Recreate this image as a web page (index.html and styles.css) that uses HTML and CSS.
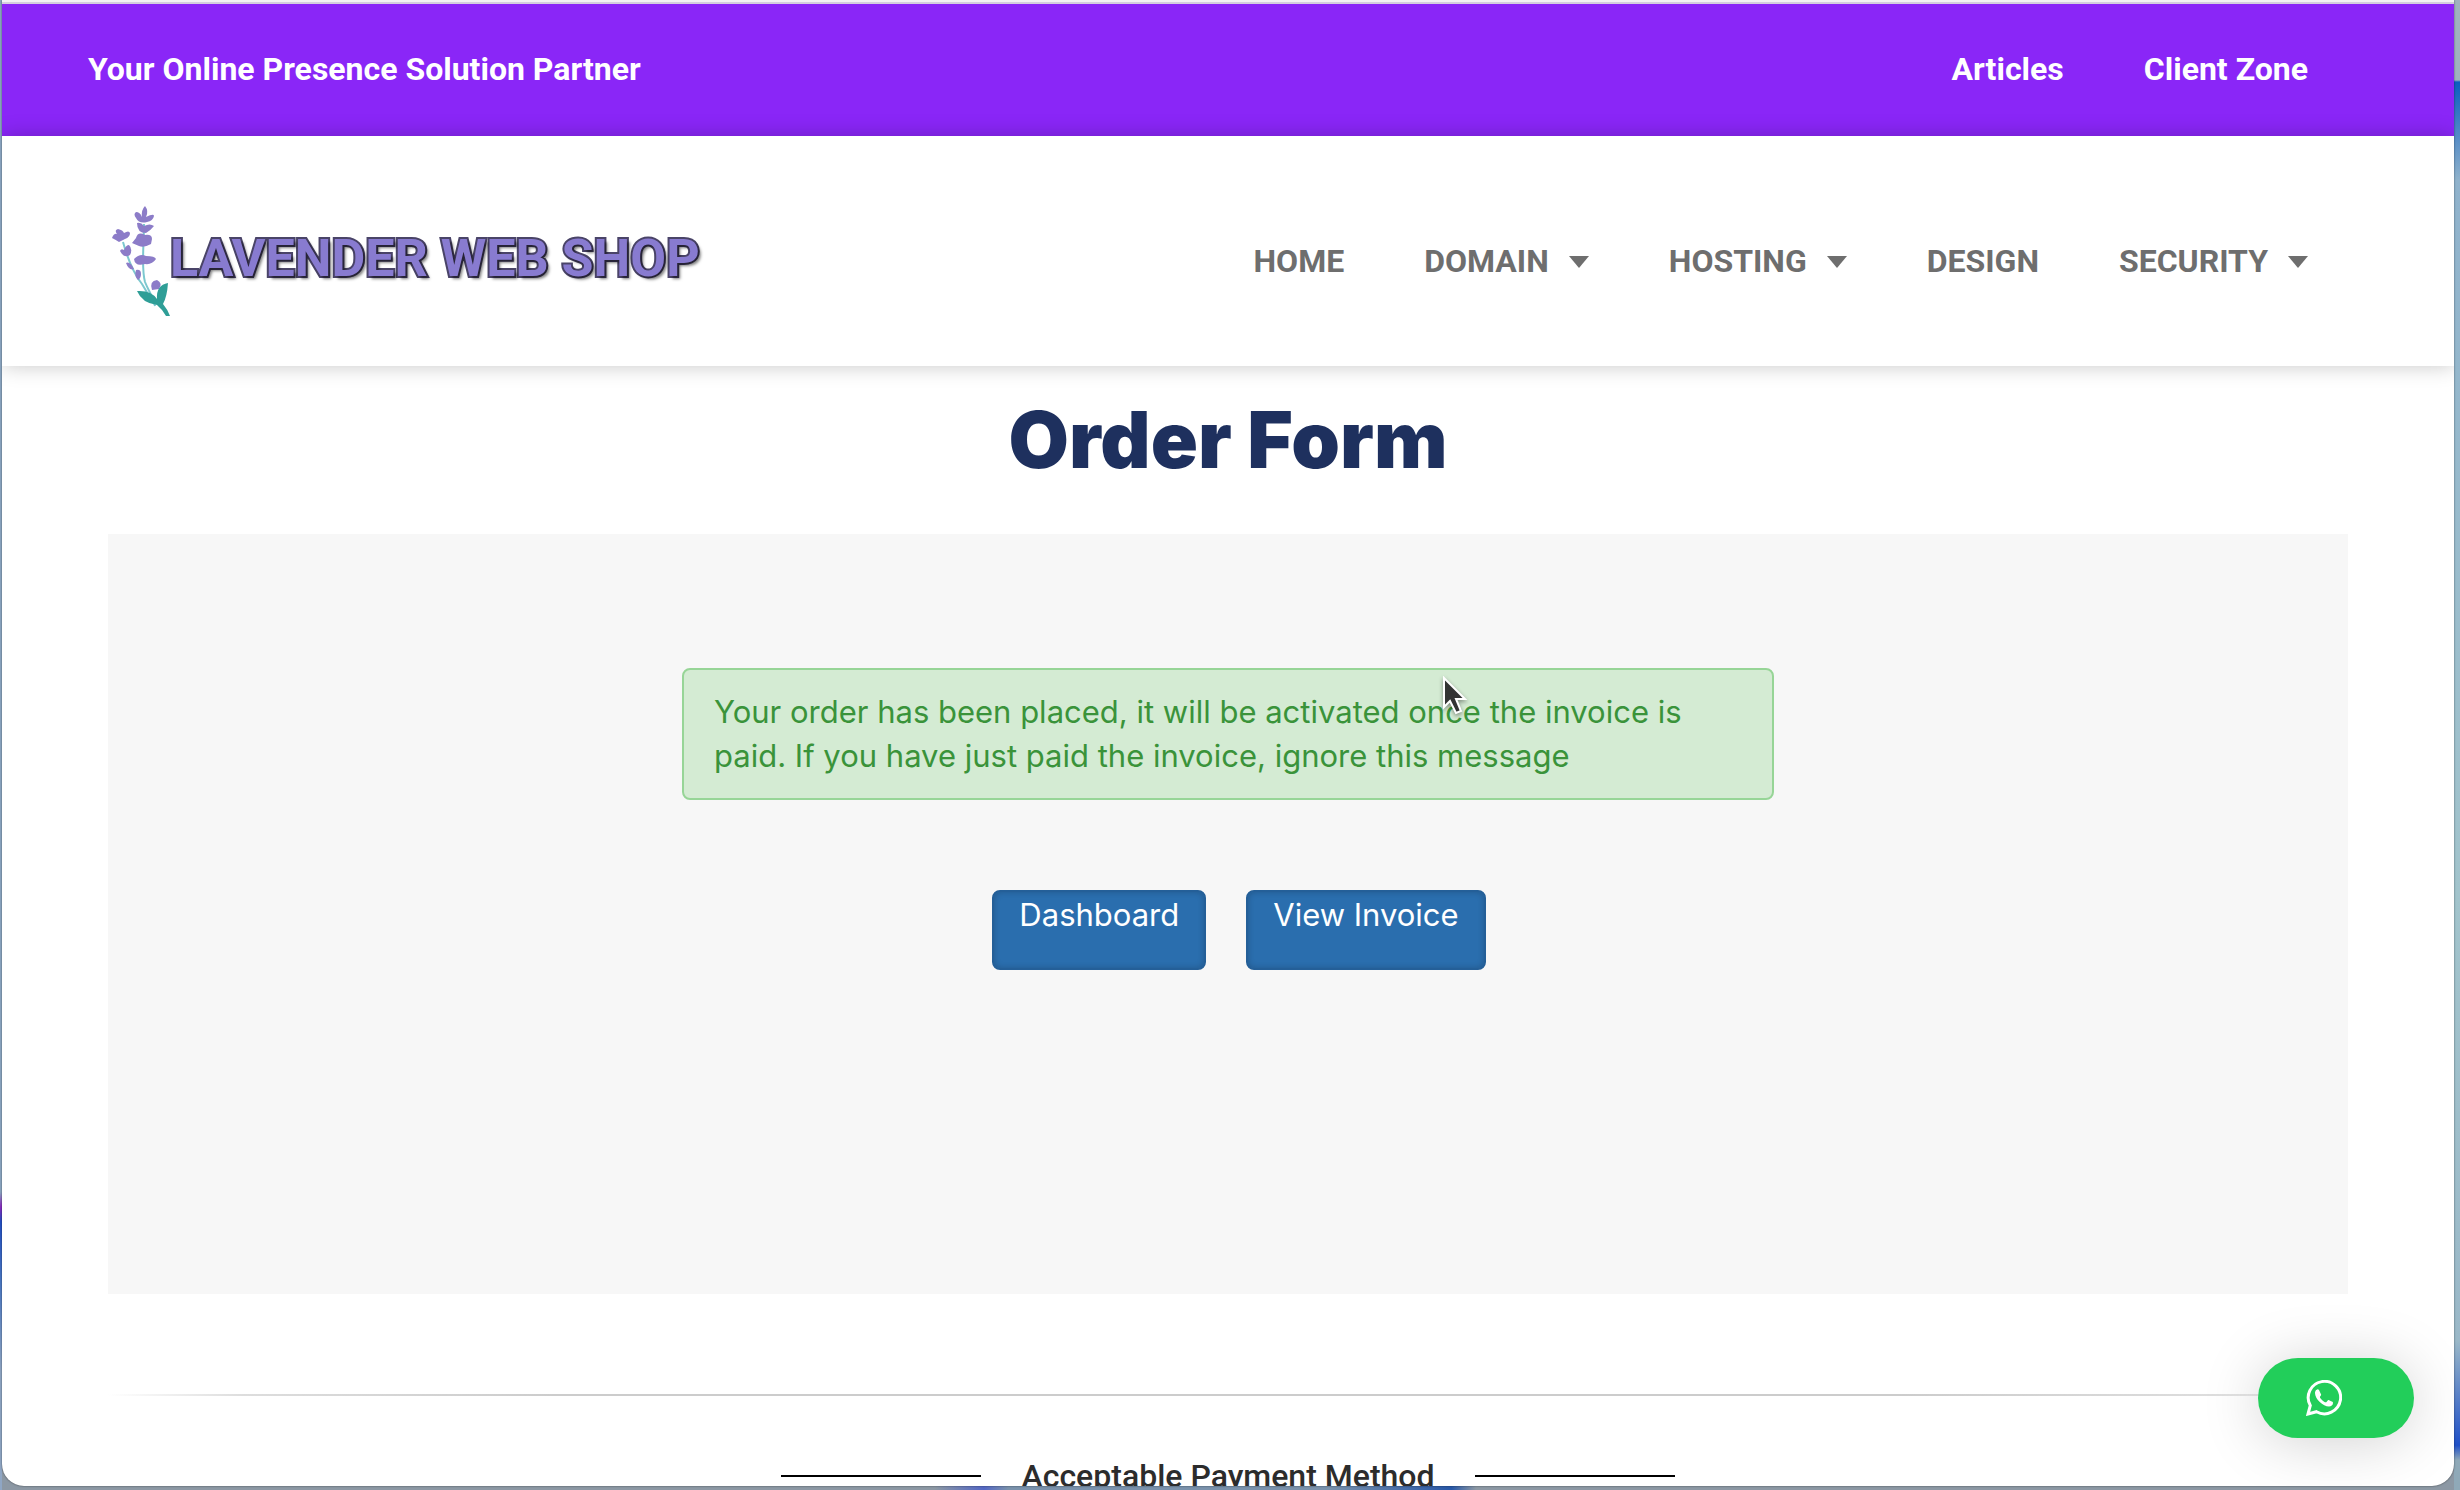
FILE: index.html
```html
<!DOCTYPE html>
<html lang="en">
<head>
    <meta charset="UTF-8">
    <meta name="viewport" content="width=device-width, initial-scale=1.0">
    <title>Order Form - Lavender Web Shop</title>
    <link rel="stylesheet" href="styles.css">
</head>
<body>
    <div class="window">
        <div class="top-bar">
            <div class="container top-inner">
                <p class="tagline">Your Online Presence Solution Partner</p>
                <nav class="menu">
                    <a href="#">Articles</a>
                    <a href="#">Client Zone</a>
                </nav>
            </div>
        </div>

        <header class="site-header">
            <div class="container header-inner">
                <a class="logo" href="#">
                    <svg class="logo-flower" viewBox="0 0 58 110" aria-hidden="true">
                        <g fill="none" stroke="#7cc8cf" stroke-width="2">
                            <path d="M32 18C32 40 29 62 33 76C37 86 41 90 43 100"/>
                            <path d="M11 36C16 54 22 68 30 78L42 98"/>
                        </g>
                        <g fill="#8c7cc8">
                            <path d="M33 0q4 5 1 11q8-4 8-1q-1 5-7 6q-8 2-11-4q-3-4 0-6q4 0 6 5q-1-7 3-11z"/>
                            <path d="M25 17q4-1 7 3q6-3 10 0q-3 4-8 7q-9 0-9-10z"/>
                            <path d="M20 37l4-5q2-7 9-3q7-1 7 4l-1 5q-7 4-12 2z"/>
                            <path d="M22 53q6-6 12-3q9 0 10 3q-4 6-11 5q-10 3-11-5z"/>
                            <path d="M0 32q2-5 5-4q-3-4 1-5q5 1 6 4q5-3 6 0q0 4-5 6l-6 3q-3-2-7-4z"/>
                            <path d="M8 45q1-3 4-1q2-5 5-5q4 4 1 10q-6 4-10-4z"/>
                            <path d="M14 57q4-2 8 6q-5 2-8-6zM24 64q5-1 5 4q0 4-3 6q-4-4-2-10zM40 84q-3-9 5-10q6 3 2 9z"/>
                        </g>
                        <path fill="#2f9e97" d="M25 85q14-1 20 8q-1-14 11-16q-1 14-5 21q5 6 7 12h-4q-4-7-9-11q-15-2-20-14z"/>
                    </svg>
                    <span class="logo-text">LAVENDER WEB SHOP</span>
                </a>
                <nav class="menu main-menu">
                    <a href="#">HOME</a>
                    <a href="#">DOMAIN <span class="caret"></span></a>
                    <a href="#">HOSTING <span class="caret"></span></a>
                    <a href="#">DESIGN</a>
                    <a href="#">SECURITY <span class="caret"></span></a>
                </nav>
            </div>
        </header>

        <main class="content">
            <h1>Order Form</h1>
            <section class="panel">
                <div class="alert">Your order has been placed, it will be activated once the invoice is paid. If you have just paid the invoice, ignore this message</div>
                <div class="actions">
                    <button class="btn" type="button">Dashboard</button>
                    <button class="btn" type="button">View Invoice</button>
                </div>
            </section>
            <hr class="fade-line">
            <h2 class="divider">Acceptable Payment Method</h2>
        </main>

        <button class="whatsapp" type="button" aria-label="WhatsApp">
            <svg viewBox="0 0 36 36" aria-hidden="true">
                <path fill="none" stroke="#fff" stroke-width="3" d="M2 34l2.300-8.500a16.200 16.200 0 1 1 6.200 6.200z"/>
                <path fill="#fff" d="M13 10c-.5-.7-1-.7-1.800-.6-1.500.4-2.200 2-2.200 3.600 0 6 8 13.500 14 13.500 2.200 0 4-1.500 4-3.600 0-.7-.2-.9-4.300-2.800-.8-.3-1.800 1.700-2.500 2.200-1.700.5-6.200-3.800-6.300-5.300.4-.9 1.500-1.600 1.200-2.400z"/>
            </svg>
        </button>
    </div>

    <!-- mouse pointer -->
    <svg class="pointer" viewBox="0 0 26 40" aria-hidden="true">
        <path fill="#333" stroke="#fff" stroke-width="2" d="M2 2v29l6-6 6 12 5-2-5-12h9z"/>
    </svg>
</body>
</html>
```

FILE: styles.css
```css
:root {
    --purple: #8a26f7;
    --navy: #1e305e;
    --grey-text: #6e6e6e;
    --green: #22ce5a;
    --blue: #2a6eae;
}

* {
    margin: 0;
    padding: 0;
    box-sizing: border-box;
}

body {
    height: 100vh;
    padding: 0 6px 4px 2px;
    overflow: hidden;
    font-family: Roboto, 'Liberation Sans', sans-serif;
    font-size: 32px;
    line-height: 44px;
    /* desktop wallpaper showing round the window */
    background:
        linear-gradient(#8ba6c2 0 80%, #8a2bc0 81%, #2450c4 82%, #4a78c4 86%, #8fa6c4 92%) left / 2px 100% no-repeat,
        linear-gradient(#9fb2bf 0 80px, #0b5cc0 82px, #8fb2cc 180px, #a2c4cc 60%, #9ab8c8 90%, #1f50c8 97%, #8fa9b8 98%) right / 6px 100% no-repeat,
        linear-gradient(90deg, #8c98a4 0 38%, #5468c4 40%, #7a92ac 41% 54%, #2858a8 59%, #8c98a4 60%);
}

a {
    color: inherit;
    text-decoration: none;
}

.window {
    position: relative;
    height: 100%;
    overflow: hidden;
    background: #fff;
    border-top: 2px solid #f2f2f2;
    border-radius: 0 0 22px 22px;
    box-shadow: 0 0 2px rgba(0, 0, 0, 0.6);
}

.container {
    max-width: 2280px;
    margin: 0 auto;
    display: flex;
    align-items: center;
    justify-content: space-between;
}

.top-bar {
    background: var(--purple);
    border-top: 2px solid #d4cede;
    color: #fff;
    font-weight: 700;
}

.top-inner {
    height: 132px;
    padding: 0 60px 2px 0;
}

.menu {
    display: flex;
    gap: 80px;
}

.menu a {
    display: flex;
    align-items: center;
    gap: 20px;
}

.site-header {
    position: relative;
    background: #fff;
    box-shadow: 0 0 20px rgba(0, 0, 0, 0.22);
}

.header-inner {
    height: 230px;
    padding: 20px 60px 0 24px;
}

.main-menu {
    color: var(--grey-text);
    font-weight: 700;
}

.caret {
    margin-top: 2px;
    border: 10px solid transparent;
    border-top: 12px solid currentColor;
    border-bottom: 0;
}

.logo {
    display: flex;
    align-items: center;
}

.logo-flower {
    width: 58px;
    height: 110px;
}

.logo-text {
    padding-bottom: 4px;
    font-size: 52px;
    font-weight: 700;
    color: #887bd0;
    -webkit-text-stroke: 4px #4a4468;
    paint-order: stroke fill;
    text-shadow: 3px 3px 3px rgba(0, 0, 0, 0.5);
}

.content {
    max-width: 2240px;
    margin: 0 auto;
}

h1 {
    padding: 34px 0 54px;
    font-family: Inter, 'Open Sans', sans-serif;
    font-size: 78px;
    line-height: 80px;
    font-weight: 900;
    text-align: center;
    color: var(--navy);
}

.panel {
    min-height: 760px;
    padding: 134px 0;
    background: #f7f7f7;
    font-family: Inter, 'Liberation Sans', sans-serif;
    font-size: 31px;
}

.alert {
    max-width: 1092px;
    margin: 0 auto;
    padding: 20px 30px;
    border: 2px solid #97d597;
    border-radius: 8px;
    background: #d4ebd3;
    color: #3a933a;
}

.actions {
    display: flex;
    justify-content: center;
    gap: 40px;
    margin: 90px 0 0 22px;
}

.btn {
    height: 80px;
    padding: 0 25px 30px;
    border: 2px solid #245f98;
    border-radius: 8px;
    background: var(--blue);
    box-shadow: inset 0 0 6px rgba(0, 0, 0, 0.2);
    color: #fff;
    font: inherit;
}

.fade-line {
    height: 2px;
    margin: 100px 0 58px;
    border: 0;
    background: linear-gradient(90deg, transparent, #ddd 6%, #ccc 20% 80%, #ddd 94%, transparent);
}

.divider {
    display: flex;
    align-items: center;
    justify-content: center;
    gap: 40px;
    font-size: 32px;
    font-weight: 500;
    color: #2c2c2c;
}

.divider::before,
.divider::after {
    content: "";
    width: 200px;
    height: 2px;
    background: #000;
}

.whatsapp {
    position: absolute;
    right: 40px;
    bottom: 48px;
    width: 156px;
    height: 80px;
    padding-left: 48px;
    border: 0;
    border-radius: 40px;
    background: var(--green);
    box-shadow: 0 4px 60px rgba(0, 0, 0, 0.18);
    text-align: left;
}

.whatsapp svg {
    display: block;
    width: 36px;
    height: 36px;
}

.pointer {
    position: absolute;
    left: 1442px;
    top: 676px;
    width: 26px;
    height: 40px;
    filter: drop-shadow(0 2px 2px rgba(0, 0, 0, 0.4));
}
```
